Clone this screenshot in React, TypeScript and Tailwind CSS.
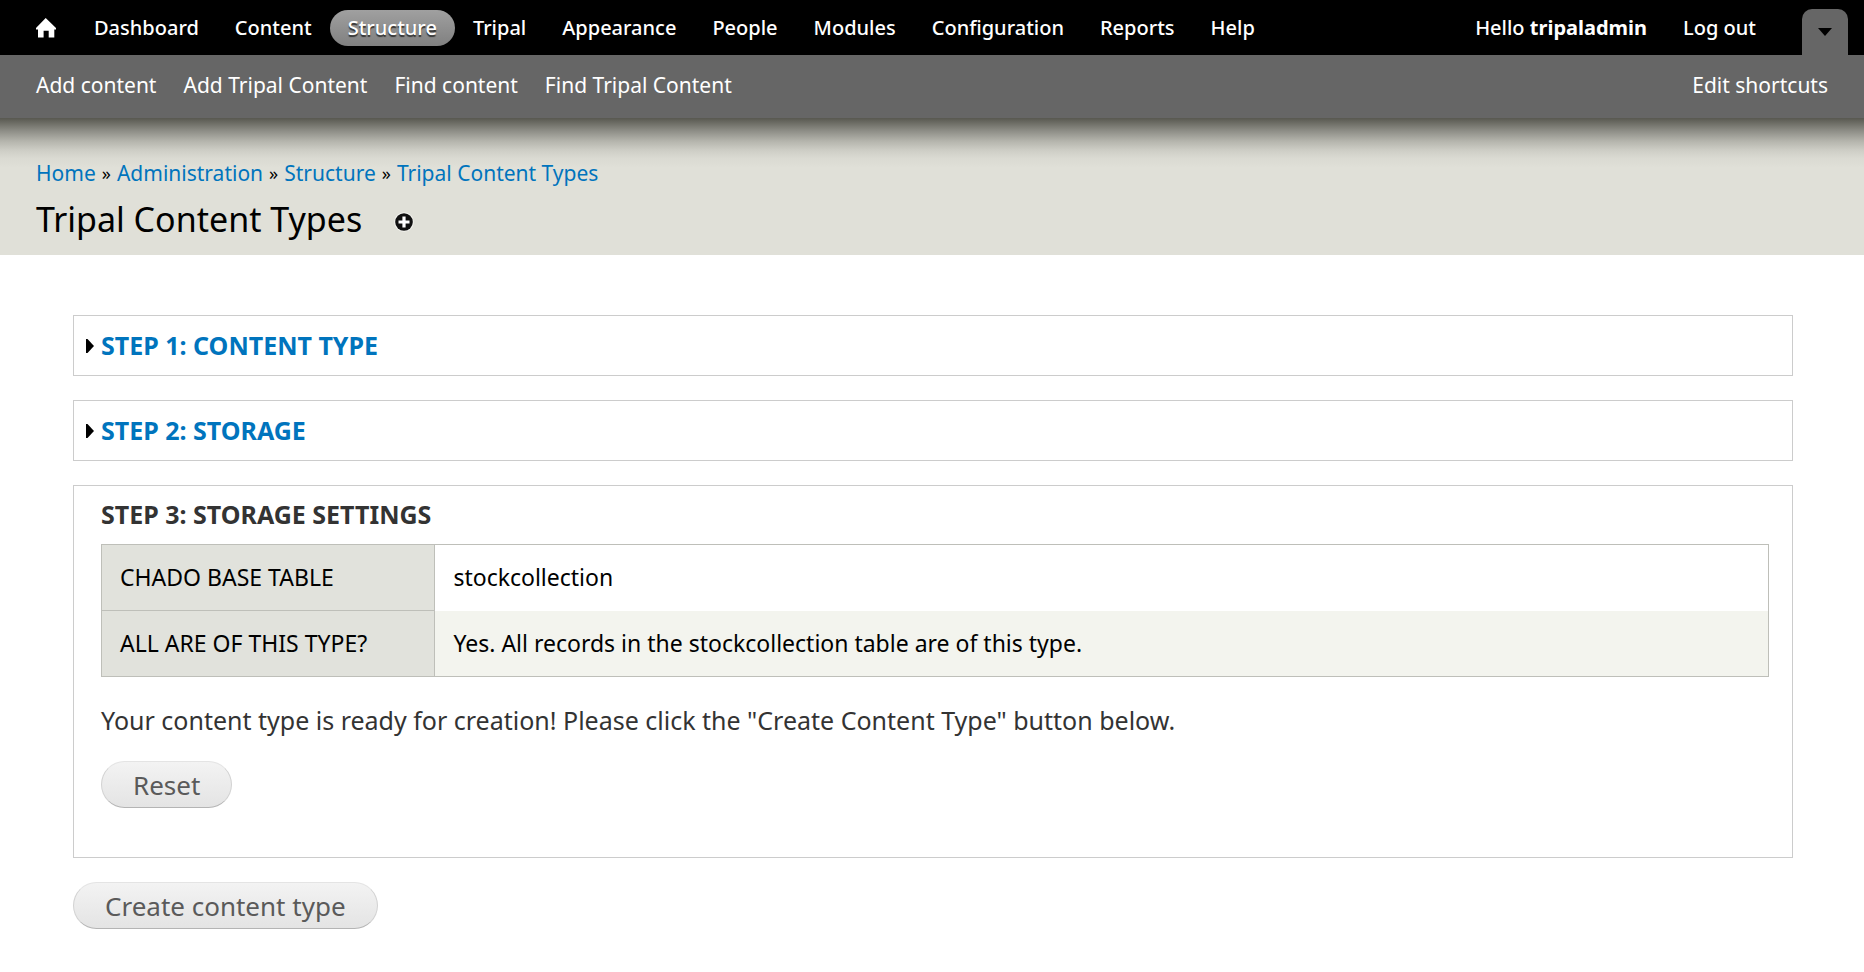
import React from "react";

const menuItems = [
  "Dashboard",
  "Content",
  "Structure",
  "Tripal",
  "Appearance",
  "People",
  "Modules",
  "Configuration",
  "Reports",
  "Help",
];

const shortcuts = ["Add content", "Add Tripal Content", "Find content", "Find Tripal Content"];

const breadcrumb = ["Home", "Administration", "Structure", "Tripal Content Types"];

const settings = [
  { label: "Chado Base Table", value: "stockcollection" },
  { label: "All are of this type?", value: "Yes. All records in the stockcollection table are of this type." },
];

function MenuLink({ label }: { label: string }) {
  const active = label === "Structure";
  return (
    <a
      href="#"
      aria-current={active ? "page" : undefined}
      className={
        active
          ? "flex h-9 items-center rounded-full bg-linear-to-b from-[#a0a0a0] to-[#808080] px-[18px] [text-shadow:0_2px_1px_#333]"
          : "flex h-9 items-center rounded-full px-[18px]"
      }
    >
      {label}
    </a>
  );
}

function Toolbar() {
  return (
    <header className="text-white">
      <div className="flex h-[55px] items-center bg-black px-4 text-xl font-medium">
        <nav aria-label="Administration" className="flex items-center">
          <a href="#" aria-label="Home" className="px-5">
            <svg width="20" height="20" viewBox="0 0 20 20" fill="currentColor" aria-hidden="true">
              <path d="M9.7 0 L20 10 V11.4 H18.3 V19.4 H12.7 V12.8 H7.6 V19.4 H2 V11.4 H0 V10 Z" />
            </svg>
          </a>
          {menuItems.map((item) => (
            <MenuLink key={item} label={item} />
          ))}
        </nav>
        <div className="ml-auto flex items-center self-stretch">
          <a href="#" className="px-[18px]">
            Hello <strong className="font-bold">tripaladmin</strong>
          </a>
          <a href="#" className="px-[18px]">
            Log out
          </a>
          <button
            type="button"
            aria-label="Hide shortcuts"
            className="ml-7 flex h-[46px] w-[46px] items-center justify-center self-end rounded-t-[10px] bg-[#666]"
          >
            <svg width="14" height="8" viewBox="0 0 14 8" aria-hidden="true">
              <path d="M0 0 H14 L7 8 Z" fill="#000" />
            </svg>
          </button>
        </div>
      </div>
      <div className="flex h-[63px] items-center justify-between bg-[#666] px-9 pb-[2px] text-[21px]">
        <nav aria-label="Shortcuts" className="flex gap-[27px]">
          {shortcuts.map((item) => (
            <a key={item} href="#">
              {item}
            </a>
          ))}
        </nav>
        <a href="#">Edit shortcuts</a>
      </div>
    </header>
  );
}

function CollapsedStep({ title }: { title: string }) {
  return (
    <section className="flex h-[61px] items-center border border-[#ccc] px-3">
      <h2 className="text-[25px] font-bold text-[#0074bd] uppercase">
        <button type="button" aria-expanded="false" className="flex items-center gap-[7px] uppercase">
          <svg width="8" height="14" viewBox="0 0 8 14" aria-hidden="true">
            <path d="M0 0 H1.5 L8 7 L1.5 14 H0 Z" fill="#000" />
          </svg>
          {title}
        </button>
      </h2>
    </section>
  );
}

function PillButton({ children }: { children: React.ReactNode }) {
  return (
    <button
      type="button"
      className="h-[47px] rounded-full border border-t-[#e4e4e4] border-r-[#d2d2d2] border-b-[#b4b4b4] border-l-[#d2d2d2] bg-linear-to-b from-[#f3f3f3] to-[#e4e4e4] px-[31px] text-[26px] leading-none text-[#5a5a5a]"
    >
      {children}
    </button>
  );
}

export default function App() {
  return (
    <div className="min-h-screen bg-white font-['Noto_Sans',sans-serif] text-black">
      <Toolbar />
      <div className="bg-[#e0e0d8] bg-[linear-gradient(#585850_0px,#8e8e87_13px,#b4b4ac_23px,#cdcdc5_32px,#dadad2_40px,#e0e0d8_50px)] px-9 pt-10 pb-3">
        <nav aria-label="Breadcrumb" className="flex gap-[6px] text-[21px] leading-[30px]">
          {breadcrumb.map((item, i) => (
            <React.Fragment key={item}>
              {i > 0 && <span className="text-lg leading-[30px]">»</span>}
              <a href="#" className="text-[#0074bd]">
                {item}
              </a>
            </React.Fragment>
          ))}
        </nav>
        <div className="mt-2 flex items-center gap-8">
          <h1 className="text-[34px] leading-[47px]">Tripal Content Types</h1>
          <button type="button" aria-label="Add to shortcuts" className="pt-1">
            <svg width="20" height="20" viewBox="0 0 20 20" aria-hidden="true">
              <circle cx="10" cy="10" r="9.8" fill="#f4f4f0" />
              <circle cx="10" cy="10" r="8.8" fill="#111" />
              <path d="M10 4.5 V15.5 M4.5 10 H15.5" stroke="#fff" strokeWidth="3.2" />
            </svg>
          </button>
        </div>
      </div>
      <main className="pt-[60px] pr-[71px] pb-10 pl-[73px]">
        <div className="flex flex-col gap-6">
          <CollapsedStep title="Step 1: Content Type" />
          <CollapsedStep title="Step 2: Storage" />
          <section className="border border-[#ccc] pt-[10px] pr-[23px] pb-[49px] pl-[27px]">
            <h2 className="text-[25px] leading-9 font-bold text-[#333] uppercase">Step 3: Storage settings</h2>
            <table className="mt-3 w-full border-collapse border border-[#bebfb9] text-left text-[23px] leading-[33px]">
              <tbody>
                {settings.map((row) => (
                  <tr key={row.label} className="align-baseline even:bg-[#f3f4ee]">
                    <th
                      scope="row"
                      className="w-[20%] border border-[#bebfb9] bg-[#e1e2dc] px-[18px] py-4 font-normal uppercase"
                    >
                      {row.label}
                    </th>
                    <td className="px-[18px] py-4">{row.value}</td>
                  </tr>
                ))}
              </tbody>
            </table>
            <p className="mt-6 mb-[22px] text-[25px] leading-[38px] text-[#333]">
              Your content type is ready for creation! Please click the "Create Content Type" button below.
            </p>
            <PillButton>Reset</PillButton>
          </section>
          <div>
            <PillButton>Create content type</PillButton>
          </div>
        </div>
      </main>
    </div>
  );
}
